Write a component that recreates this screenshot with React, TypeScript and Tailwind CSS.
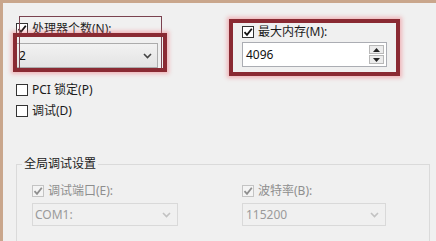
import React from 'react';

const font = { fontFamily: '"Noto Sans", "Noto Sans CJK SC", sans-serif' };

const Check: React.FC<{ on?: boolean; disabled?: boolean }> = ({ on, disabled }) => (
  <span
    className={
      'flex items-center justify-center w-[12px] h-[12px] border shrink-0 ' +
      (disabled ? 'border-[#c4c4c4] bg-[#f4f4f4]' : 'border-[#333333] bg-white')
    }
  >
    {on && (
      <svg width="10" height="10" viewBox="0 0 10 10">
        <path
          d="M1.5 5.2 L4 7.8 L8.8 1.8"
          fill="none"
          stroke={disabled ? '#8f8f8f' : '#111111'}
          strokeWidth="1.8"
        />
      </svg>
    )}
  </span>
);

const Chevron: React.FC<{ light?: boolean }> = ({ light }) => (
  <svg width="9" height="6" viewBox="0 0 9 6">
    <path d="M1 1 L4.5 4.5 L8 1" fill="none" stroke={light ? '#c2c2c2' : '#444444'} strokeWidth="1.6" />
  </svg>
);

const CheckRow: React.FC<{ label: string; on?: boolean; disabled?: boolean }> = ({ label, on, disabled }) => (
  <div className="flex items-center gap-[4px] h-[12px]">
    <Check on={on} disabled={disabled} />
    <span className={'text-[12px] leading-[12px] ' + (disabled ? 'text-[#8e8e8e]' : 'text-[#1b1b1b]')}>{label}</span>
  </div>
);

const App: React.FC = () => {
  return (
    <div className="relative w-[436px] h-[241px] overflow-hidden bg-[#f0f0f0]" style={font}>
      <div className="w-full h-full border-t-[3px] border-l-[3px] border-[#c9a68c] flex flex-col">
        {/* top settings */}
        <div className="flex">
          <div className="ml-[13px] w-[226px] flex flex-col">
            <div className="mt-[20px]">
              <CheckRow label="处理器个数(N):" on />
            </div>
            <div className="mt-[8px] w-[142px] h-[25px] border border-[#acacac] bg-gradient-to-b from-[#f2f2f2] to-[#e3e3e3] flex items-center justify-between pl-[2px] pr-[5px]">
              <span className="text-[12px] text-[#111111]">2</span>
              <Chevron />
            </div>
            <div className="mt-[16px]">
              <CheckRow label="PCI 锁定(P)" />
            </div>
            <div className="mt-[9px]">
              <CheckRow label="调试(D)" />
            </div>
          </div>
          <div className="flex flex-col">
            <div className="mt-[23px]">
              <CheckRow label="最大内存(M):" on />
            </div>
            <div className="mt-[4px] w-[145px] h-[25px] border border-[#abadb3] bg-white flex items-center justify-between pl-[3px] pr-[2px]">
              <span className="text-[12px] text-[#111111]">4096</span>
              <div className="flex flex-col gap-[1px]">
                <div className="w-[15px] h-[9px] border border-[#b8b8b8] bg-[#ececec] flex items-center justify-center">
                  <svg width="7" height="4" viewBox="0 0 7 4"><path d="M0 4 L3.5 0 L7 4 Z" fill="#222222" /></svg>
                </div>
                <div className="w-[15px] h-[9px] border border-[#b8b8b8] bg-[#ececec] flex items-center justify-center">
                  <svg width="7" height="4" viewBox="0 0 7 4"><path d="M0 0 L3.5 4 L7 0 Z" fill="#222222" /></svg>
                </div>
              </div>
            </div>
          </div>
        </div>

        {/* global debug group */}
        <fieldset className="mt-[39px] ml-[13px] w-[414px] h-[120px] border border-[#dadada] shrink-0">
          <legend className="ml-[5px] px-[2px] text-[12px] leading-[16px] text-[#1b1b1b]">全局调试设置</legend>
          <div className="flex mt-[13px]">
            <div className="ml-[15px] w-[210px] flex flex-col">
              <CheckRow label="调试端口(E):" on disabled />
              <div className="mt-[6px] w-[146px] h-[23px] border border-[#d9d9d9] flex items-center justify-between pl-[2px] pr-[6px]">
                <span className="text-[12px] text-[#9a9a9a]">COM1:</span>
                <Chevron light />
              </div>
            </div>
            <div className="flex flex-col">
              <CheckRow label="波特率(B):" on disabled />
              <div className="mt-[6px] w-[144px] h-[23px] border border-[#d9d9d9] flex items-center justify-between pl-[3px] pr-[6px]">
                <span className="text-[12px] text-[#9a9a9a]">115200</span>
                <Chevron light />
              </div>
            </div>
          </div>
        </fieldset>
      </div>

      {/* annotation boxes */}
      <div className="absolute left-[19px] top-[16px] w-[143px] h-[56px] border border-[#7a4250]" />
      <div className="absolute left-[13px] top-[33px] w-[154px] h-[39px] border-[4px] border-[#8a2a33] shadow-[0_0_4px_2px_rgba(240,110,120,0.45)]" />
      <div className="absolute left-[229px] top-[19px] w-[171px] h-[57px] border-[4px] border-[#8a2a33] shadow-[0_0_4px_2px_rgba(240,110,120,0.45)]" />
    </div>
  );
};

export default App;
